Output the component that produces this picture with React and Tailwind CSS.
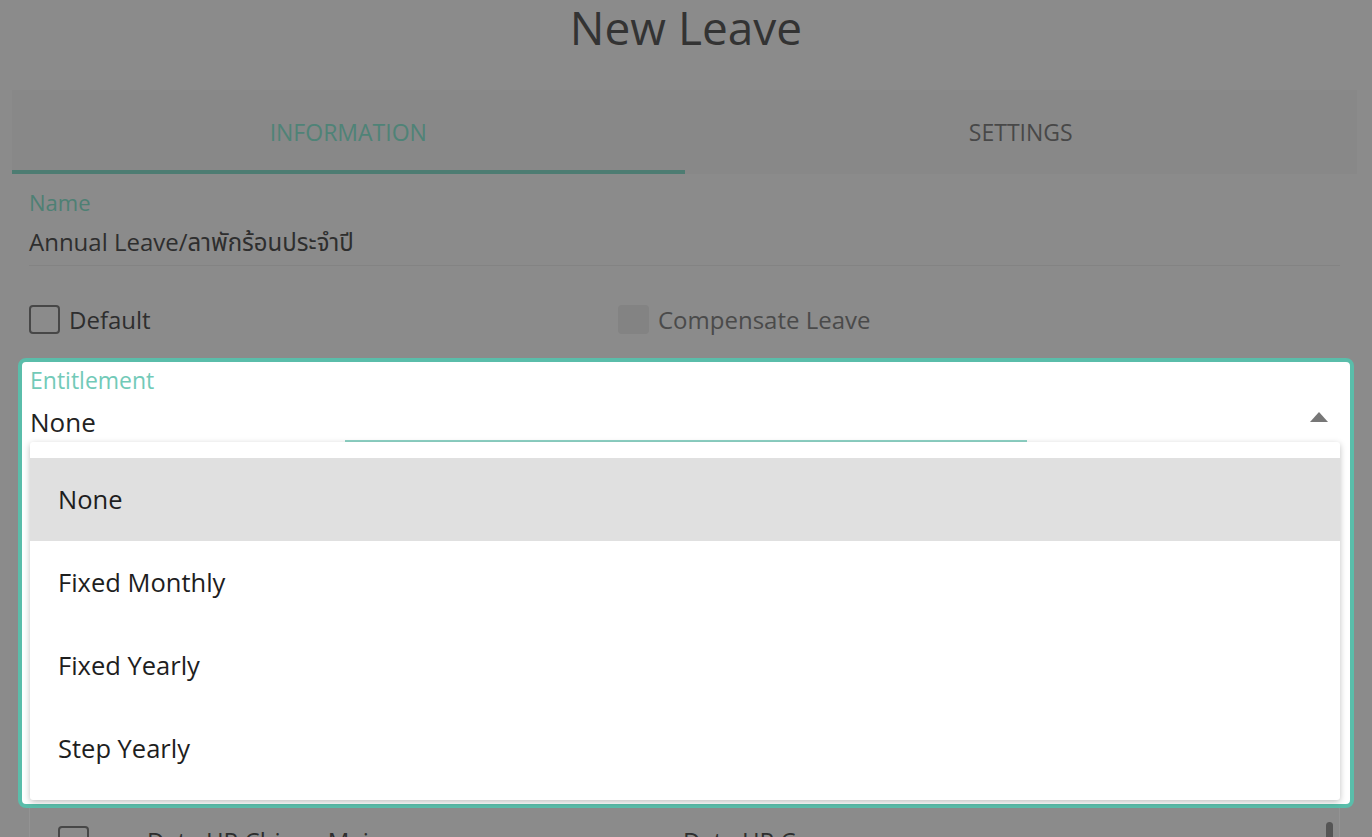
import { useState } from "react";

const font = { fontFamily: '"Open Sans", "Noto Sans", "Noto Sans Thai", sans-serif' };

export default function App() {
  const [value] = useState("None");
  const options = ["None", "Fixed Monthly", "Fixed Yearly", "Step Yearly"];

  return (
    <div className="h-[837px] w-[1372px] overflow-hidden bg-[#8b8b8b]" style={font}>
      {/* title */}
      <div className="h-[90px] pt-[1px] text-center">
        <h1 className="text-[46px] leading-[52px] text-[#333333]">New Leave</h1>
      </div>

      {/* tabs */}
      <div className="ml-[12px] mr-[15px] flex h-[84px] bg-[#888888]">
        <div className="flex flex-1 flex-col">
          <div className="flex flex-1 items-center justify-center pt-[4px] text-[23px] uppercase text-[#4f8377]">
            Information
          </div>
          <div className="h-[4px] bg-[#4d7c72]" />
        </div>
        <div className="flex flex-1 items-center justify-center text-[23px] uppercase text-[#484848]">
          Settings
        </div>
      </div>

      {/* name */}
      <div className="ml-[29px] mr-[32px] border-b border-[#838383] pt-[16px] pb-[6px]">
        <div className="h-[24px] text-[22px] leading-[24px] text-[#4e8074]">Name</div>
        <div className="mt-[11px] h-[34px] text-[24px] leading-[34px] text-[#2e2e2e]">
          Annual Leave/ลาพักร้อนประจำปี
        </div>
      </div>

      {/* checkboxes */}
      <div className="ml-[29px] mr-[32px] flex h-[92px] items-start pt-[39px]">
        <label className="flex w-[589px] items-center gap-[9px]">
          <span className="h-[29px] w-[31px] rounded-[4px] border-2 border-[#474747]" />
          <span className="text-[24px] leading-[29px] text-[#2e2e2e]">Default</span>
        </label>
        <label className="flex items-center gap-[9px]">
          <span className="h-[29px] w-[31px] rounded-[4px] bg-[#838383]" />
          <span className="text-[24px] leading-[29px] text-[#4a4a4a]">Compensate Leave</span>
        </label>
      </div>

      {/* highlighted entitlement select */}
      <div className="ml-[18px] mr-[18px] rounded-[8px] border-4 border-[#5abdaa] bg-white pb-[4px]">
        <div className="flex h-[36px] items-center pl-[8px] text-[23px] text-[#72cab8]">
          Entitlement
        </div>
        <div className="flex h-[42px] items-center justify-between pt-[6px] pl-[8px] pr-[22px]">
          <span className="text-[26px] leading-[36px] text-[#222222]">{value}</span>
          <svg width="18" height="10" viewBox="0 0 18 10" className="-mt-[10px]">
            <path d="M0 10 L9 0 L18 10 Z" fill="#777777" />
          </svg>
        </div>
        <div className="h-[2px]">
          <div className="ml-[323px] h-[2px] w-[682px] bg-[#8fd4c6]" />
        </div>
        <div className="ml-[8px] mr-[10px] h-[358px] overflow-hidden rounded-[3px] bg-white pt-[16px] pb-[10px] shadow-[0_2px_6px_rgba(0,0,0,0.25)]">
          {options.map((o) => (
            <div
              key={o}
              className={`flex h-[83px] items-center pl-[28px] text-[25.5px] text-[#1e1e1e] ${
                o === value ? "bg-[#e0e0e0]" : ""
              }`}
            >
              {o}
            </div>
          ))}
        </div>
      </div>

      {/* list behind the overlay */}
      <div className="relative ml-[29px] mr-[32px] flex h-[40px] border-x border-[#939393] pt-[18px]">
        <span className="ml-[28px] h-[29px] w-[31px] rounded-[4px] border-2 border-[#474747]" />
        <span className="ml-[58px] w-[536px] text-[24px] leading-[29px] text-[#2e2e2e]">
          Data HR Chiang Mai
        </span>
        <span className="text-[24px] leading-[29px] text-[#2e2e2e]">Data HR Cnx</span>
        <span className="absolute right-[6px] top-[14px] h-[30px] w-[7px] rounded-full bg-[#555555]" />
      </div>
    </div>
  );
}
